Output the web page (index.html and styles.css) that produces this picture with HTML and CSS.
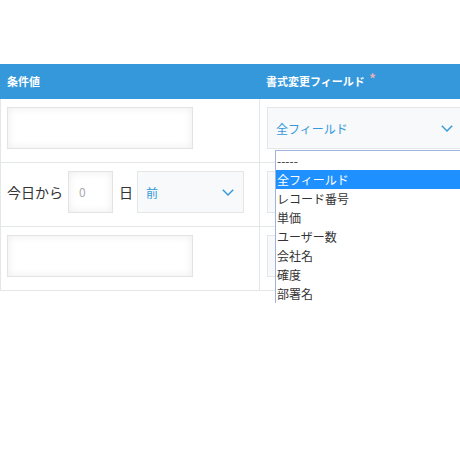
FILE: index.html
```html
<!DOCTYPE html>
<html lang="ja">
<head>
    <meta charset="UTF-8">
    <meta name="viewport" content="width=device-width, initial-scale=1.0">
    <title>条件書式</title>
    <link rel="stylesheet" href="styles.css">
</head>
<body>
    <div class="cond-table">
        <div class="head-cell col-left">条件値</div>
        <div class="head-cell col-right">書式変更フィールド<span class="required">*</span></div>

        <div class="cell col-left">
            <div class="text-input"></div>
        </div>
        <div class="cell col-right">
            <div class="select wide">
                <span class="select-value">全フィールド</span>
                <svg class="chevron" width="12" height="7" viewBox="0 0 12 7"><polyline points="0.8,0.8 6,6 11.2,0.8" fill="none" stroke="#3498db" stroke-width="1.4"/></svg>
            </div>
        </div>

        <div class="cell col-left date-row">
            <span class="label">今日から</span>
            <div class="num-input">0</div>
            <span class="label">日</span>
            <div class="select narrow">
                <span class="select-value">前</span>
                <svg class="chevron" width="12" height="7" viewBox="0 0 12 7"><polyline points="0.8,0.8 6,6 11.2,0.8" fill="none" stroke="#3498db" stroke-width="1.4"/></svg>
            </div>
        </div>
        <div class="cell col-right">
            <div class="select wide"></div>
        </div>

        <div class="cell col-left">
            <div class="text-input"></div>
        </div>
        <div class="cell col-right">
            <div class="select wide"></div>
        </div>
    </div>

    <ul class="option-list">
        <li>-----</li>
        <li class="selected">全フィールド</li>
        <li>レコード番号</li>
        <li>単価</li>
        <li>ユーザー数</li>
        <li>会社名</li>
        <li>確度</li>
        <li>部署名</li>
    </ul>
</body>
</html>
```

FILE: styles.css
```css
body {
    margin: 0;
    padding: 64px 0 0 0;
    width: 460px;
    height: 460px;
    overflow: hidden;
    background-color: #fff;
    color: #333;
    font-family: "Noto Sans CJK JP", "Noto Sans", sans-serif;
    position: relative;
    box-sizing: border-box;
}

.cond-table {
    display: grid;
    grid-template-columns: 260px 200px;
    width: 460px;
    overflow: hidden;
}

.head-cell {
    height: 35px;
    line-height: 35px;
    background-color: #3498db;
    color: #fff;
    font-size: 11px;
    font-weight: bold;
    padding-left: 7px;
}

.head-cell.col-right {
    padding-left: 6px;
}

.required {
    color: #f2b3b3;
    font-weight: normal;
    font-size: 16px;
    margin-left: 4px;
    vertical-align: top;
    line-height: 30px;
}

.cell {
    height: 64px;
    box-sizing: border-box;
    border-bottom: 1px solid #e3e7e8;
    padding: 8px 0 0 7px;
    min-width: 0;
}

.cell.col-left {
    border-left: 1px solid #e3e7e8;
    border-right: 1px solid #e3e7e8;
    padding-left: 6px;
}

.text-input {
    width: 184px;
    height: 40px;
    border: 1px solid #e3e3e3;
    background-color: #fff;
    box-shadow: inset 0 0 8px #ececec;
}

.date-row {
    display: flex;
    align-items: flex-start;
}

.label {
    font-size: 14px;
    line-height: 42px;
}

.num-input {
    width: 33px;
    height: 40px;
    margin: 0 6px 0 5px;
    padding-left: 10px;
    border: 1px solid #e3e3e3;
    box-shadow: inset 0 0 8px #ececec;
    font-size: 12px;
    line-height: 40px;
    color: #aaa;
}

.select {
    height: 40px;
    display: flex;
    align-items: center;
    justify-content: space-between;
    padding: 0 9px 0 8px;
    border: 1px solid #e3e7e8;
    background-color: #f7f9fa;
    color: #3498db;
    font-size: 12px;
    flex-shrink: 0;
}

.select.wide {
    width: 177px;
}

.select.narrow {
    width: 88px;
    margin-left: 4px;
}

.option-list {
    position: absolute;
    left: 275px;
    top: 150px;
    width: 185px;
    margin: 0;
    padding: 0;
    list-style: none;
    background-color: #fff;
    border-top: 1px solid #9fb3dd;
    border-left: 1px solid #9fb3dd;
    font-size: 12px;
}

.option-list li {
    height: 19px;
    line-height: 19px;
    padding-left: 1px;
    color: #333;
}

.option-list li.selected {
    background-color: #1e90ff;
    color: #fff;
}
```
